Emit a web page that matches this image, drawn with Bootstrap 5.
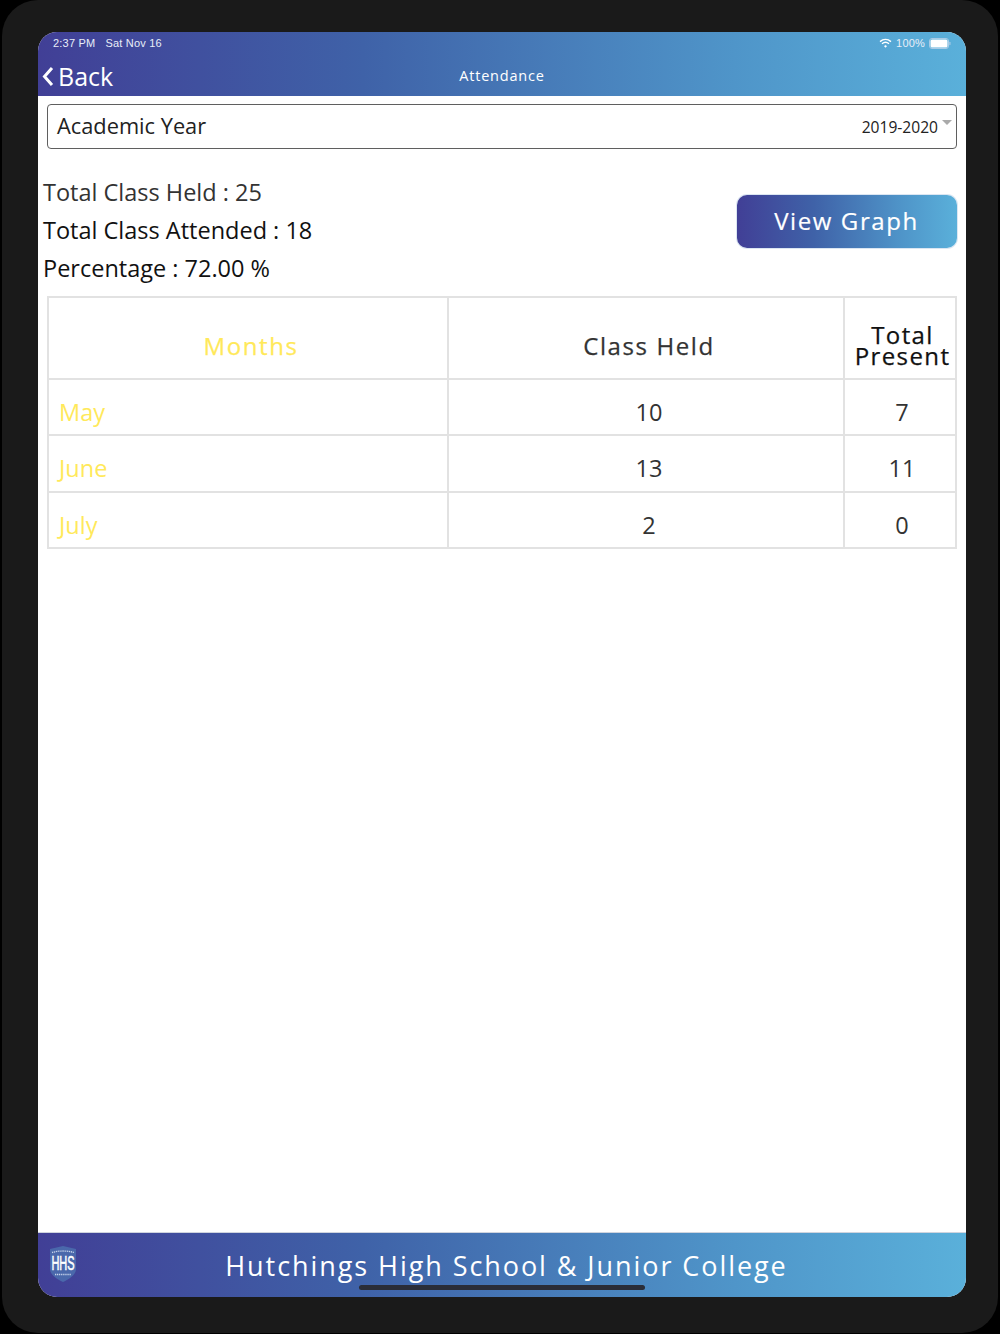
<!DOCTYPE html>
<html lang="en">
<head>
<meta charset="utf-8">
<title>Attendance</title>
<link href="https://cdn.jsdelivr.net/npm/bootstrap@5.3.0/dist/css/bootstrap.min.css" rel="stylesheet">
<style>
html,body{height:100%;margin:0;background:#000;}
body{font-family:"Open Sans","Liberation Sans",sans-serif;width:1000px;height:1334px;overflow:hidden;}
.bezel{width:996px;height:1333px;margin-left:2px;background:#1a1a1a;border-radius:36px;padding:32px 32px 36px 36px;}
.screen{height:1265px;background:#fff;border-radius:19px;overflow:hidden;}
.grad{background:linear-gradient(90deg,#413f96 0%,#3f62a8 35%,#4f95c9 75%,#5ab0da 100%);color:#fff;}
.topbar{height:64px;flex:none;}
.statusrow{height:22px;padding:0 15px;font-size:11px;line-height:23px;font-family:"Liberation Sans",sans-serif;letter-spacing:.2px;color:#e8eef8;}
.statusleft{gap:10px;}
.navrow{height:42px;}
.backlink{left:4px;top:0;font-size:25px;line-height:44px;color:#fff;text-decoration:none;}
.backlink svg{margin-right:4px;vertical-align:-1px;}
.navtitle{font-size:14.5px;letter-spacing:.8px;line-height:43px;}
.yearbox{margin:8px 9px 0;height:45px;border:1.5px solid #5f5f5f;border-radius:4px;padding:0 4px 0 9px;color:#222;}
.yearlabel{font-size:21.8px;margin-top:-1px;}
.yearval{font-size:15.6px;margin-top:2px;}
.caretmark{width:0;height:0;border-left:5px solid transparent;border-right:5px solid transparent;border-top:5px solid #aaa;margin:-8px 0 0 4px;}
.summary{padding:24px 9px 0 5px;}
.sumline{font-size:23.5px;line-height:38px;color:#111;}
.sumline.muted{color:#333;}
.graphbtn{width:220px;height:53px;border:0;border-radius:10px;margin-top:22px;font-size:24px;font-weight:500;letter-spacing:1.6px;padding:0 1px 2px 0;box-shadow:0 0 0 1px #dbe6f2;-webkit-text-stroke:.2px #fff;}
.graphbtn:hover{color:#fff;}
.attable{width:908px;margin:9px 0 0 9px;border-collapse:collapse;table-layout:fixed;color:#333;}
.attable th,.attable td{border:2px solid #e2e2e2;text-align:center;vertical-align:middle;padding:0 0 0 6px;background:transparent;}
.attable th{height:82px;font-size:24px;font-weight:500;letter-spacing:1.6px;padding-top:16px;-webkit-text-stroke:.25px currentColor;}
.attable td{height:56.3px;font-size:23.5px;padding-top:11px;}
.attable .yl{color:#ffe95a;}
.attable td.yl{text-align:left;padding-left:10px;}
.attable .tp{line-height:21.500px;color:#111;padding:14px 0 0 5px;font-size:24px;letter-spacing:1.4px;}
.attable td.tc{padding-left:4px;}
.footbar{height:64px;flex:none;box-shadow:0 -1px 0 #cfd4de;}
.crest{left:11px;top:12px;}
.foottitle{font-size:27px;font-weight:500;letter-spacing:1.93px;line-height:66px;padding-left:9px;}
.homebar{left:321px;bottom:7px;width:286px;height:5px;border-radius:3px;background:#2a2d38;}
</style>
</head>
<body>
<div class="bezel">
<div class="screen d-flex flex-column">
  <div class="topbar grad">
    <div class="statusrow d-flex justify-content-between">
      <div class="statusleft d-flex"><span>2:37 PM</span><span>Sat Nov 16</span></div>
      <div class="d-flex align-items-center">
        <svg width="13" height="10" viewBox="0 0 13 10" fill="none" stroke="#fff" stroke-width="1.4"><path d="M1 3.600C4.300 .8 8.700 .8 12 3.600"/><path d="M3 5.700C5 4 8 4 10 5.700"/><circle cx="6.500" cy="8.300" r=".9" fill="#fff" stroke-width=".6"/></svg>
        <span class="ms-1">100%</span>
        <svg class="ms-1" width="22" height="11" viewBox="0 0 22 11"><rect x=".5" y=".5" width="19" height="10" rx="2.500" fill="none" stroke="#a9cbe6"/><rect x="1.500" y="1.500" width="17" height="8" rx="1.500" fill="#fff"/><rect x="20.300" y="3.800" width="1.200" height="3.400" rx=".6" fill="#a9cbe6"/></svg>
      </div>
    </div>
    <div class="navrow position-relative text-center">
      <a class="backlink position-absolute" href="#"><svg width="12" height="21" viewBox="0 0 12 21" fill="none" stroke="#fff" stroke-width="3"><path d="M10 2 2.500 10.500 10 19"/></svg>Back</a>
      <div class="navtitle">Attendance</div>
    </div>
  </div>

  <div class="flex-grow-1">
    <div class="yearbox d-flex align-items-center justify-content-between">
      <span class="yearlabel">Academic Year</span>
      <span class="d-flex align-items-center"><span class="yearval">2019-2020</span><span class="caretmark"></span></span>
    </div>
    <div class="summary d-flex justify-content-between align-items-start">
      <div>
        <div class="sumline muted">Total Class Held : 25</div>
        <div class="sumline">Total Class Attended : 18</div>
        <div class="sumline">Percentage : 72.00 %</div>
      </div>
      <button class="btn graphbtn grad" type="button">View Graph</button>
    </div>
    <table class="attable">
      <colgroup><col style="width:400px"><col style="width:396px"><col style="width:112px"></colgroup>
      <thead><tr><th class="yl">Months</th><th>Class Held</th><th class="tp">Total Present</th></tr></thead>
      <tbody>
        <tr><td class="yl">May</td><td>10</td><td class="tc">7</td></tr>
        <tr><td class="yl">June</td><td>13</td><td class="tc">11</td></tr>
        <tr><td class="yl">July</td><td>2</td><td class="tc">0</td></tr>
      </tbody>
    </table>
  </div>

  <div class="footbar grad position-relative text-center">
    <svg class="crest position-absolute" width="28" height="38" viewBox="0 0 28 38" role="img" aria-label="HHS crest"><path d="M1 4 14 1 27 4V24C27 30 20 34 14 37 8 34 1 30 1 24Z" fill="#4a68ab"/><path d="M3 7.500Q14 4.500 25 7.500M6 29.500H22" fill="none" stroke="#c5d3ea" stroke-width="1.300" stroke-dasharray="1.200 .7"/><text transform="translate(14 25) scale(.55 1)" text-anchor="middle" fill="#fff" stroke="#fff" stroke-width=".6" font-size="20" font-family="'Liberation Sans',sans-serif">HHS</text></svg>
    <div class="foottitle">Hutchings High School &amp; Junior College</div>
    <div class="homebar position-absolute"></div>
  </div>
</div>
</div>
<script src="https://cdn.jsdelivr.net/npm/bootstrap@5.3.0/dist/js/bootstrap.bundle.min.js"></script>
</body>
</html>
